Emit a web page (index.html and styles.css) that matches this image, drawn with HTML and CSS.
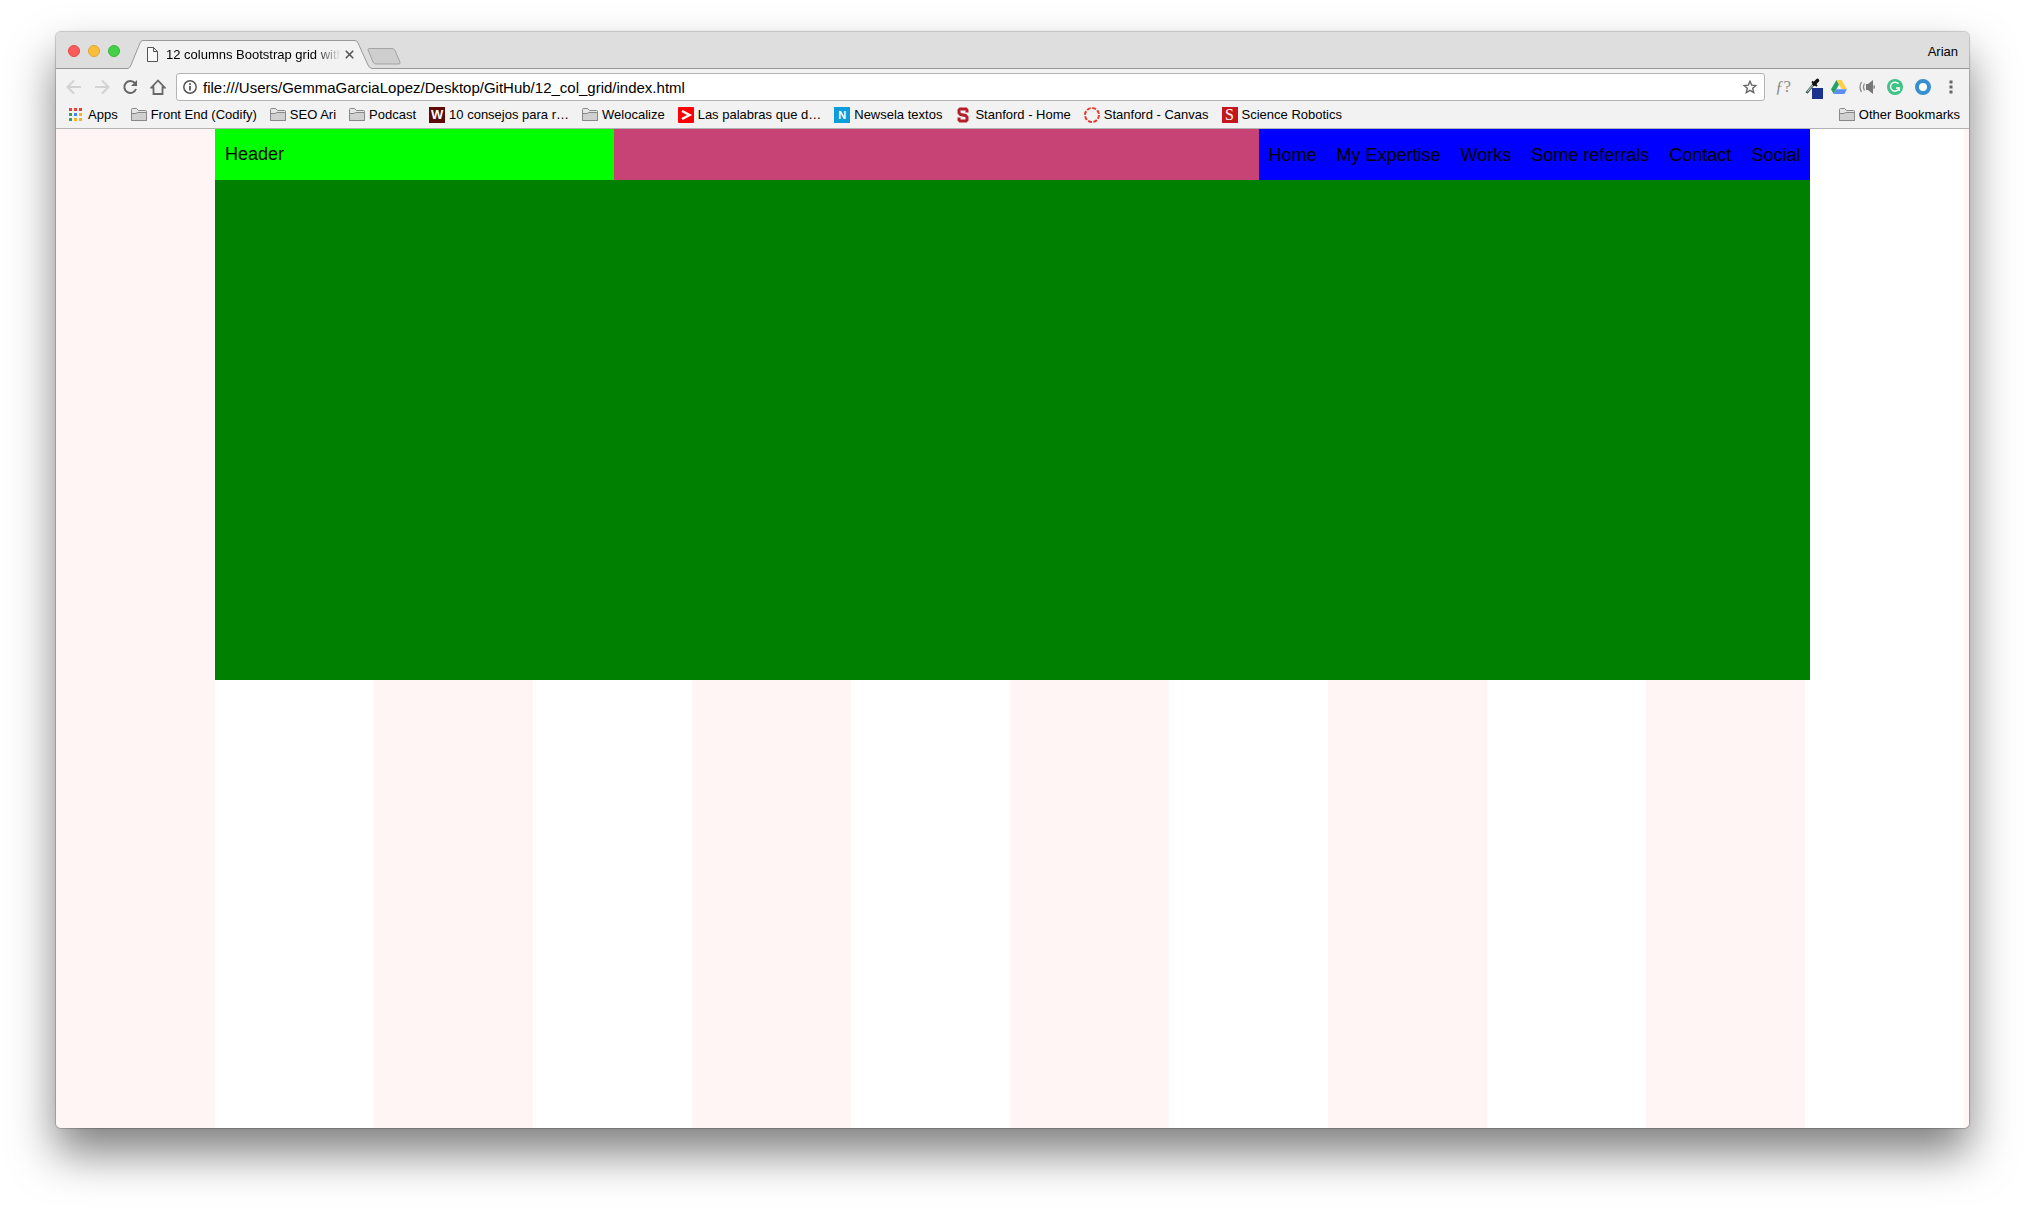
FILE: index.html
```html
<!DOCTYPE html>
<html lang="en">
<head>
<meta charset="utf-8">
<title>12 columns Bootstrap grid</title>
<link rel="stylesheet" href="styles.css">
</head>
<body>
<svg class="defs" aria-hidden="true">
  <symbol id="folder" viewBox="0 0 16 14">
    <path d="M.5 12.500V1.500Q.5.5 1.500.5H5.500L7.500 2.500H14.500Q15.500 2.500 15.500 3.500V12.500Z" fill="#e6e6e6" stroke="#888"/>
    <path d="M.5 12.500V5.500H5L6.500 4.500H15.500V12.500Z" fill="#d0d0d0" stroke="#888"/>
  </symbol>
</svg>
<div class="window">
  <header class="tabstrip">
    <div class="lights">
      <button class="light red" aria-label="Close window"></button>
      <button class="light yellow" aria-label="Minimize window"></button>
      <button class="light green" aria-label="Zoom window"></button>
    </div>
    <div class="tab">
      <svg class="tab-shape" viewBox="0 0 244 29" aria-hidden="true"><path d="M0 28.500Q2 28 3 25L12 3Q13 .5 15 .5H227Q229 .5 230 3L240 25Q241 28 244 28.500V29H0Z" fill="#f2f2f2"/><path d="M0 28.500Q2 28 3 25L12 3Q13 .5 15 .5H227Q229 .5 230 3L240 25Q241 28 244 28.500" fill="none" stroke="#999"/></svg>
      <svg width="11" height="15" viewBox="0 0 11 15" aria-hidden="true"><path d="M.5.5H6.500L10.500 4.500V14.500H.5ZM6.500.5V4.500H10.500" fill="#fafafa" stroke="#555"/></svg>
      <span class="tab-title">12 columns Bootstrap grid with</span>
      <button class="tab-close" aria-label="Close tab"><svg width="9" height="9" viewBox="0 0 9 9"><path d="M.8.8L8.200 8.200M8.200.8L.8 8.200" stroke="#555" stroke-width="1.600"/></svg></button>
    </div>
    <button class="new-tab" aria-label="New tab"><svg width="34" height="17" viewBox="0 0 34 17"><path d="M2.500.5H25Q27 .5 28 2.500L33 14Q33.500 16 32 16H9Q7 16 6 14L1 2Q.5 .5 2.500.5Z" fill="#cecece" stroke="#a3a3a3"/></svg></button>
    <span class="profile">Arian</span>
  </header>
  <div class="toolbar">
    <button class="tool" aria-label="Back"><svg width="16" height="16" viewBox="0 0 16 16"><path d="M15 8H2M8 1.500L1.500 8L8 14.500" fill="none" stroke="#d2d2d2" stroke-width="2"/></svg></button>
    <button class="tool" aria-label="Forward"><svg width="16" height="16" viewBox="0 0 16 16"><path d="M1 8H14M8 1.500L14.500 8L8 14.500" fill="none" stroke="#d2d2d2" stroke-width="2"/></svg></button>
    <button class="tool" aria-label="Reload"><svg width="16" height="16" viewBox="0 0 16 16"><path d="M13 4.200A6 6 0 1 0 14 10" fill="none" stroke="#666" stroke-width="2"/><path d="M15 1V7H9Z" fill="#666"/></svg></button>
    <button class="tool" aria-label="Home"><svg width="16" height="16" viewBox="0 0 16 16"><path d="M8 1.500L1.500 8.500H3.500V15H12.500V8.500H14.500Z" fill="none" stroke="#666" stroke-width="1.800"/></svg></button>
    <div class="omnibox">
      <svg width="14" height="14" viewBox="0 0 14 14" aria-hidden="true"><circle cx="7" cy="7" r="6.200" fill="none" stroke="#555" stroke-width="1.500"/><path d="M7 6V10.500M7 3.300V5" stroke="#555" stroke-width="1.800"/></svg>
      <input class="url" type="text" aria-label="Address" value="file:///Users/GemmaGarciaLopez/Desktop/GitHub/12_col_grid/index.html">
      <button class="star" aria-label="Bookmark page"><svg width="14" height="14" viewBox="0 0 14 14"><path d="M7 1.200L8.700 5.100L13 5.500L9.700 8.300L10.700 12.500L7 10.300L3.300 12.500L4.300 8.300L1 5.500L5.300 5.100Z" fill="none" stroke="#666" stroke-width="1.400"/></svg></button>
    </div>
    <button class="tool font-tool" aria-label="Identify font"><i>ƒ</i>?</button>
    <button class="tool" aria-label="Color picker"><svg width="24" height="24" viewBox="-7 0 24 24"><path d="M.5 18L7.500 9.500" stroke="#3f5f4c" stroke-width="2.600"/><path d="M1.500 16.500L7 10" stroke="#d3e0d7"/><path d="M6 6.500L11 11" stroke="#111" stroke-width="2"/><path d="M8 9L11.500 5.500" stroke="#111" stroke-width="3.600" stroke-linecap="round"/><path d="M6 13H17V24H6Z" fill="#1b338c"/></svg></button>
    <button class="tool" aria-label="Drive"><svg width="16" height="14" viewBox="0 0 16 14"><path d="M5.500 0L0 9.300L2.700 14L8 4.500Z" fill="#21a464"/><path d="M5.500 0H10.700L16 9.300H10.700Z" fill="#ffcf48"/><path d="M5.400 9.300H16L13.300 14H2.700Z" fill="#5a8df8"/></svg></button>
    <button class="tool" aria-label="Sound"><svg width="16" height="14" viewBox="0 0 16 14"><path d="M7 4H9L14 0V14L9 10H7ZM14.500 5Q16 5 16 7Q16 9 14.500 9Z" fill="#777"/><path d="M5.500 3.500Q3.500 7 5.500 10.500M2.500 2Q-.5 7 2.500 12" fill="none" stroke="#888" stroke-width="1.300"/></svg></button>
    <button class="tool" aria-label="Grammar"><svg width="16" height="16" viewBox="0 0 16 16"><circle cx="8" cy="8" r="8" fill="#3dc384"/><path d="M11.500 4.800A4.500 4.500 0 1 0 12.300 9H9M12.300 8.500V12" fill="none" stroke="#fff" stroke-width="1.500"/></svg></button>
    <button class="tool" aria-label="Ring"><svg width="16" height="16" viewBox="0 0 16 16"><circle cx="8" cy="8" r="6" fill="#fff" stroke="#368fcf" stroke-width="4"/></svg></button>
    <button class="tool" aria-label="Menu"><svg width="4" height="14" viewBox="0 0 4 14"><path d="M.5.5h3v3h-3zM.5 5.500h3v3h-3zM.5 10.500h3v3h-3z" fill="#666"/></svg></button>
  </div>
  <nav class="bookmarks" aria-label="Bookmarks">
    <a class="apps" href="#"><svg width="13" height="13" viewBox="0 0 13 13"><path d="M0 0h3v3H0zM5 0h3v3H5zM10 0h3v3h-3z" fill="#ea4335"/><path d="M0 5h3v3H0zM0 10h3v3H0z" fill="#34a05a"/><path d="M5 5h3v3H5z" fill="#4285f4"/><path d="M10 5h3v3h-3zM5 10h3v3H5zM10 10h3v3h-3z" fill="#f5b32a"/></svg>Apps</a>
    <a href="#"><svg width="16" height="14"><use href="#folder"/></svg>Front End (Codify)</a>
    <a href="#"><svg width="16" height="14"><use href="#folder"/></svg>SEO Ari</a>
    <a href="#"><svg width="16" height="14"><use href="#folder"/></svg>Podcast</a>
    <a href="#"><span class="favicon maroon">W</span>10 consejos para r…</a>
    <a href="#"><svg width="16" height="14"><use href="#folder"/></svg>Welocalize</a>
    <a href="#"><svg width="16" height="16" viewBox="0 0 16 16"><rect width="16" height="16" rx="1" fill="#f00"/><path d="M4 4L11.500 8L4 12" fill="none" stroke="#fff" stroke-width="2.500"/></svg>Las palabras que d…</a>
    <a href="#"><span class="favicon sky">N</span>Newsela textos</a>
    <a href="#"><svg width="16" height="16" viewBox="0 0 16 16"><path d="M12 5.500V3L11 2H5L4 3V6L5.500 7.500L10.500 8.500L12 10V13L11 14H5L4 13V10.500" fill="none" stroke="#b3202c" stroke-width="3"/></svg>Stanford - Home</a>
    <a href="#"><svg width="16" height="16" viewBox="0 0 16 16"><circle cx="8" cy="8" r="7" fill="none" stroke="#e23d30" stroke-width="2" stroke-dasharray="4 1.500"/></svg>Stanford - Canvas</a>
    <a href="#"><span class="favicon crimson">S</span>Science Robotics</a>
    <a class="other" href="#"><svg width="16" height="14"><use href="#folder"/></svg>Other Bookmarks</a>
  </nav>
  <main class="viewport">
    <div class="container">
      <div class="row">
        <div class="brand">Header</div>
        <nav class="menu">
          <span>Home</span><span>My Expertise</span><span>Works</span><span>Some referrals</span><span>Contact</span><span>Social</span>
        </nav>
      </div>
      <section class="hero"></section>
    </div>
  </main>
</div>
</body>
</html>
```
FILE: styles.css
```css
* { box-sizing: border-box; }

body {
  margin: 0;
  min-height: 100vh;
  display: flex;
  padding: 32px 56px 80px;
  background: #fff;
  color: #000;
  font-family: "Liberation Sans", Arial, sans-serif;
  font-size: 13px;
}

button {
  padding: 0;
  border: 0;
  background: none;
  font: inherit;
}

svg { flex: none; display: block; }

.defs { position: absolute; width: 0; height: 0; }

.window {
  flex: 1;
  min-width: 0;
  display: flex;
  flex-direction: column;
  border-radius: 5px;
  background: #f2f2f2;
  box-shadow: 0 0 1px 1px rgba(0, 0, 0, .2), 0 25px 45px rgba(0, 0, 0, .5);
  overflow: hidden;
}

/* Tab strip */
.tabstrip {
  height: 37px;
  display: flex;
  align-items: flex-end;
  background: #dedede;
  border-bottom: 1px solid #999;
}

.lights {
  align-self: center;
  display: flex;
  gap: 8px;
  padding: 0 8px 0 12px;
  margin-top: 2px;
}

.light { width: 12px; height: 12px; border-radius: 50%; }
.red { background: #f95c5b; border: 1px solid #e14b4b; }
.yellow { background: #fabe3c; border: 1px solid #dfa533; }
.green { background: #45d048; border: 1px solid #37b53a; }

.tab {
  position: relative;
  width: 244px;
  height: 29px;
  margin-bottom: -1px;
  padding: 0 18px 0 19px;
  display: flex;
  align-items: center;
}

.tab-shape { position: absolute; left: 0; top: 0; width: 244px; height: 29px; }
.tab > :not(.tab-shape) { position: relative; }

.tab-title {
  flex: 1;
  margin: 0 4px 0 8px;
  white-space: nowrap;
  overflow: hidden;
  mask-image: linear-gradient(90deg, #000 85%, transparent);
}

.tab-close { width: 9px; }
.new-tab { align-self: center; margin-top: 12px; margin-left: -5px; }
.profile { margin: 0 11px 9px auto; }

/* Toolbar */
.toolbar {
  display: flex;
  align-items: center;
  padding: 4px 4px 0;
}

.tool {
  width: 28px;
  height: 28px;
  display: flex;
  align-items: center;
  justify-content: center;
}

.font-tool {
  font-family: "Liberation Serif", serif;
  font-size: 17px;
  color: #8c8c8c;
}

.omnibox {
  flex: 1;
  height: 28px;
  margin: 0 4px;
  padding: 0 7px 0 6px;
  display: flex;
  align-items: center;
  background: #fff;
  border: 1px solid #b4b4b4;
  border-radius: 3px;
}

.url {
  flex: 1;
  border: 0;
  outline: 0;
  padding: 0 6px;
  font: 15px "Liberation Sans", Arial, sans-serif;
  color: #000;
}

/* Bookmarks bar */
.bookmarks {
  height: 28px;
  display: flex;
  align-items: center;
  gap: 13px;
  padding: 0 9px 0 13px;
  border-bottom: 1px solid #b2b2b2;
  white-space: nowrap;
}

.bookmarks a {
  display: flex;
  align-items: center;
  gap: 4px;
  color: #000;
  text-decoration: none;
}

.bookmarks .apps { gap: 6px; }
.bookmarks .other { margin-left: auto; }

.favicon {
  width: 16px;
  height: 16px;
  line-height: 16px;
  text-align: center;
  color: #fff;
  font-weight: bold;
}

.maroon { background: #5c0a0a; }
.sky { background: #0d9ddb; font-size: 11px; }
.crimson { background: #c4161c; font: 16px/16px "Liberation Serif", serif; }

/* Page with a striped twelve column guide */
.viewport {
  flex: 1;
  background: repeating-linear-gradient(90deg, #fff5f4 0 8.31%, #fff 8.31% 16.62%);
}

.container {
  width: 83.4%;
  margin-left: 8.31%;
  font-size: 18px;
}

.row {
  display: flex;
  height: 51px;
  background: #c74375;
}

.brand {
  width: 25%;
  padding: 15px 10px;
  line-height: 20px;
  background: #0f0;
}

.menu {
  margin-left: auto;
  display: flex;
  background: #00f;
}

.menu span { padding: 16px 10px 15px; line-height: 20px; }

.hero { height: 500px; background: #008000; }
```
